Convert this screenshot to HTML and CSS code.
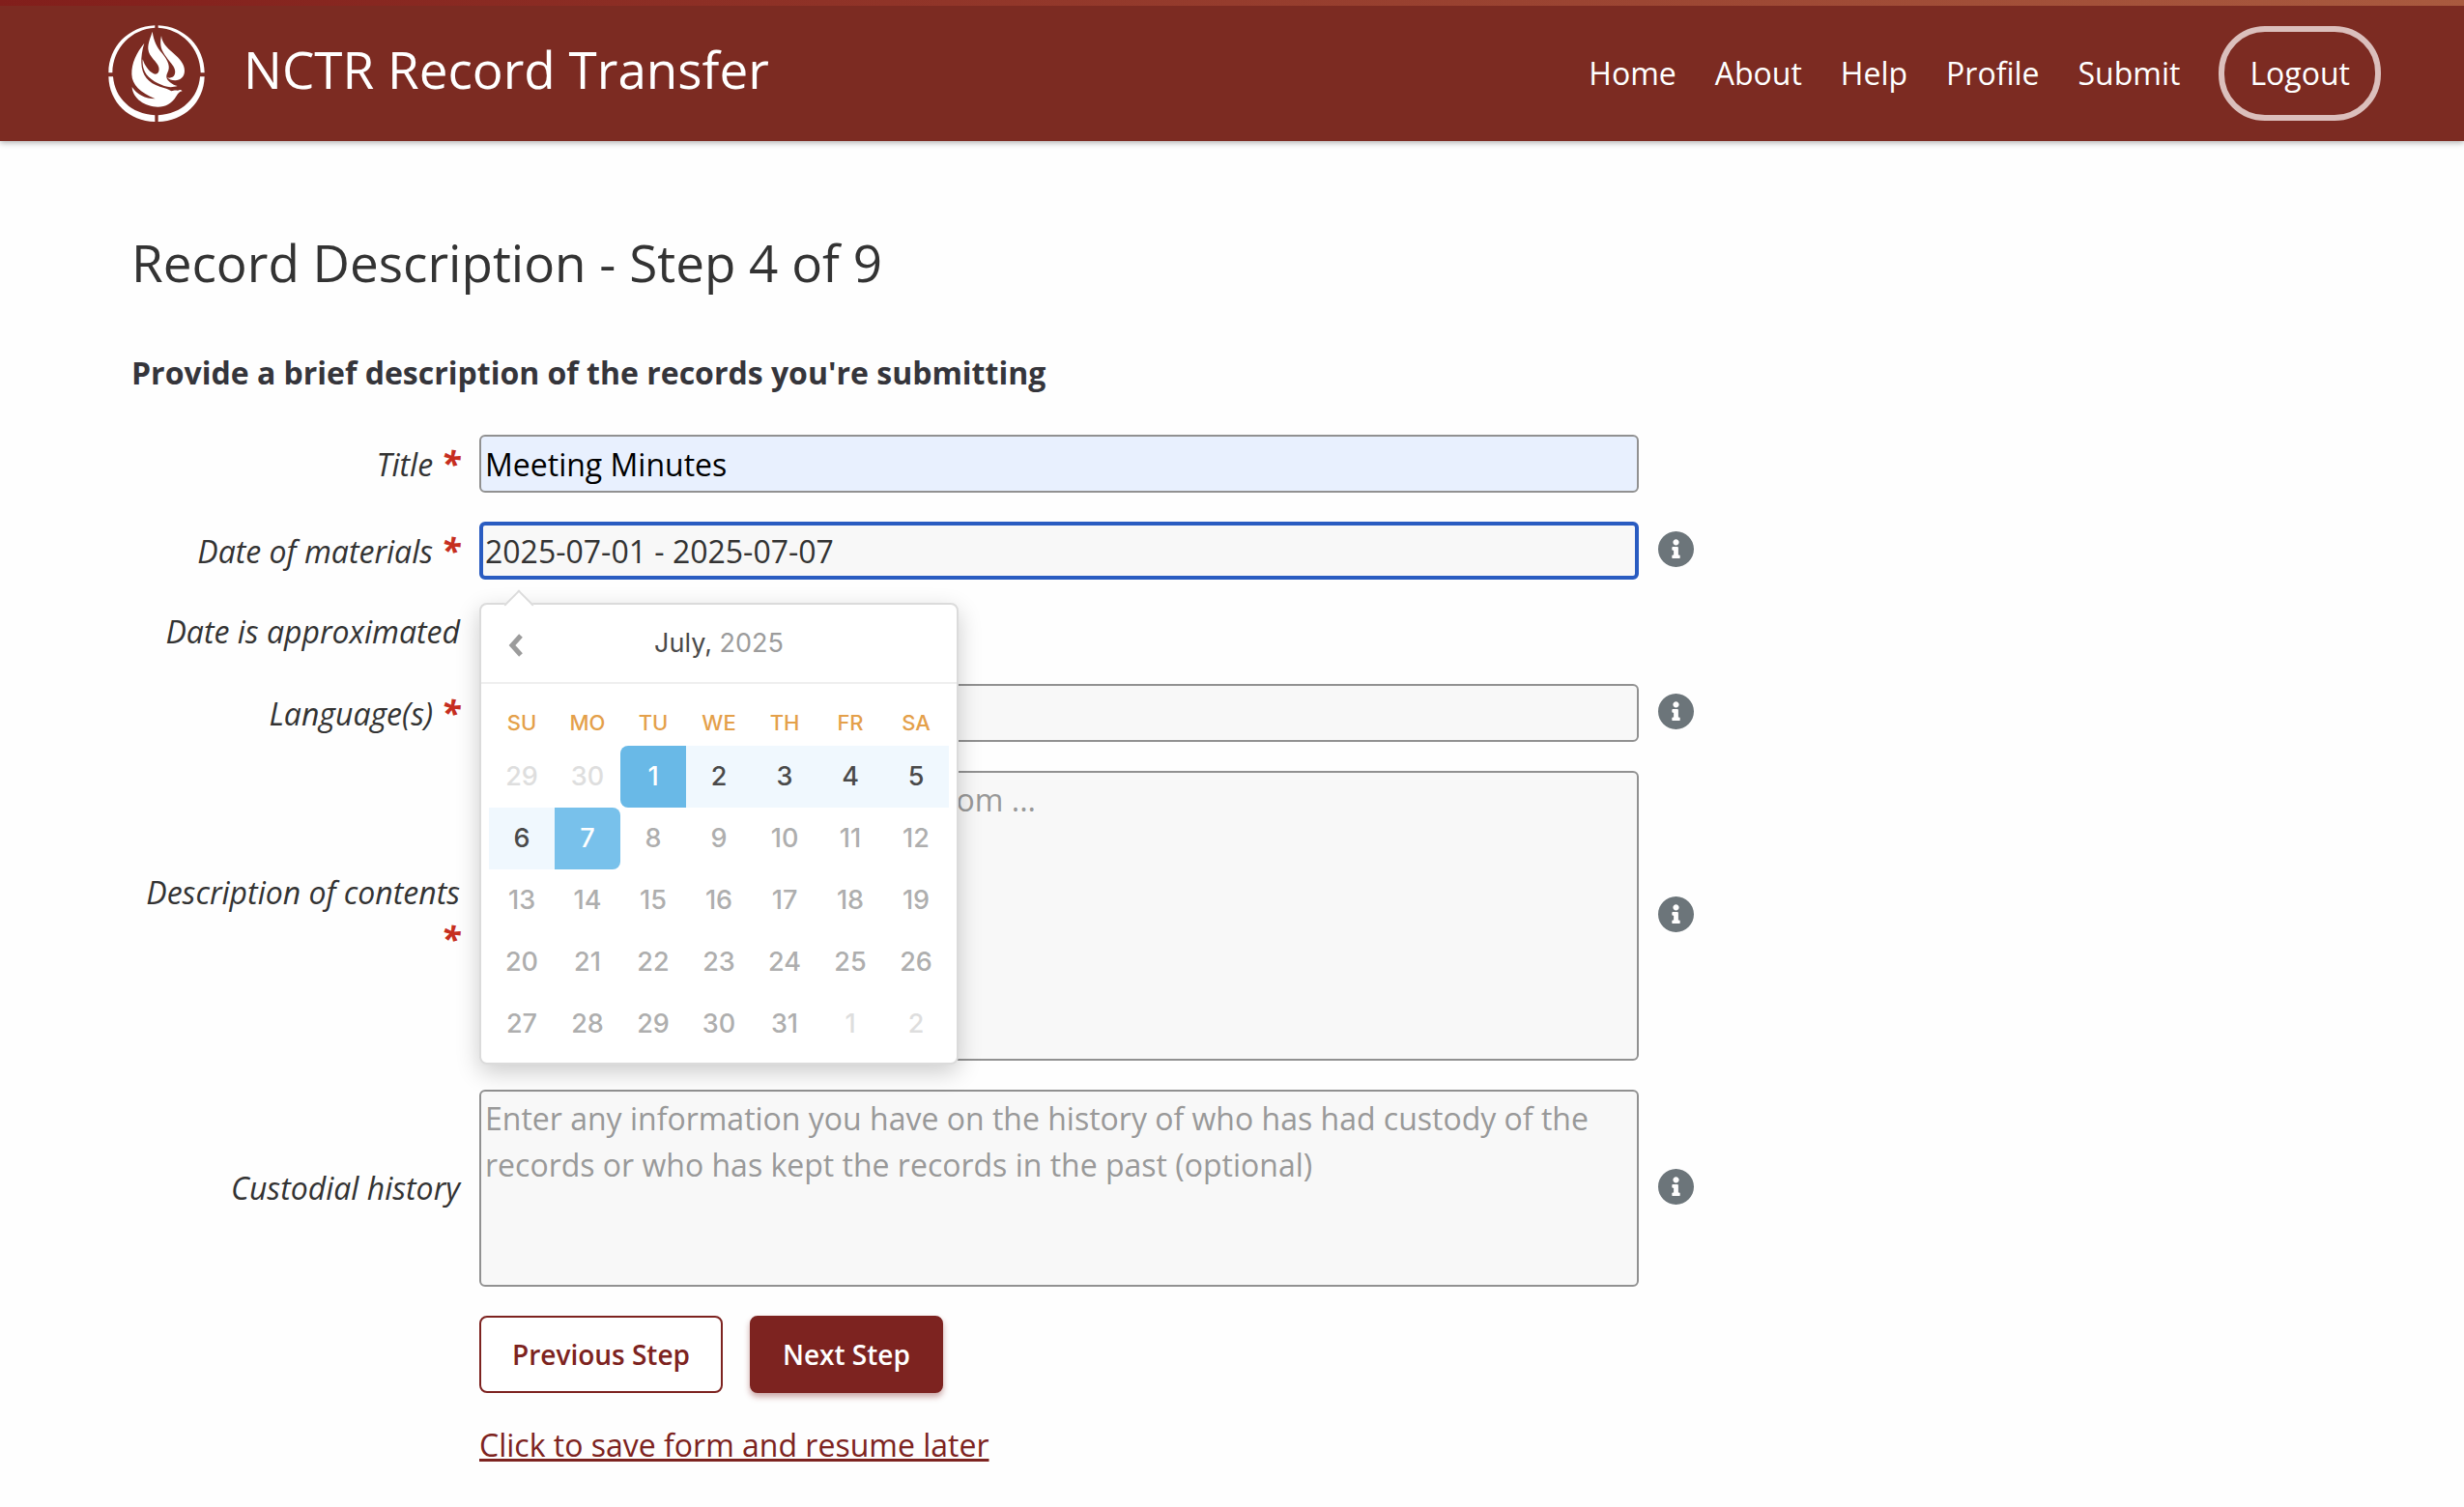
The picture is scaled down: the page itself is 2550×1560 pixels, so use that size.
FILE: index.html
```html
<!DOCTYPE html>
<html lang="en">

<head>
    <meta charset="UTF-8">
    <meta name="viewport" content="width=device-width, initial-scale=1.0">
    <title>NCTR Record Transfer</title>
    <link rel="stylesheet" href="styles.css">
</head>

<body>
    <!-- info icon shared by the form rows -->
    <svg class="sprite" aria-hidden="true">
        <symbol id="info" viewBox="8 8 496 496">
            <path d="M256 8C119.043 8 8 119.083 8 256c0 136.997 111.043 248 248 248s248-111.003 248-248C504 119.083 392.957 8 256 8zm0 110c23.196 0 42 18.804 42 42s-18.804 42-42 42-42-18.804-42-42 18.804-42 42-42zm56 254c0 6.627-5.373 12-12 12h-88c-6.627 0-12-5.373-12-12v-24c0-6.627 5.373-12 12-12h12v-64h-12c-6.627 0-12-5.373-12-12v-24c0-6.627 5.373-12 12-12h64c6.627 0 12 5.373 12 12v100h12c6.627 0 12 5.373 12 12v24z" />
        </symbol>
    </svg>

    <header class="header">
        <a class="brand" href="#">
            <svg class="logo" viewBox="36 32 300 300" aria-hidden="true">
                <path d="M181 33v7C110 44 50 101 49 180H37C37 100 99 36 181 33zM191 33v7c71 4 131 61 132 140h12C335 100 273 36 191 33zM37 192h14c5 67 57 116 130 120v20C101 331 39 272 37 192zM335 192h-14c-5 67-57 116-130 120v20c80-1 142-60 144-140z" />
                <path d="M173 52c5 32 14 48 30 67 20 25 27 43 17 61-6 12-3 21 8 30 7 6 16 10 23 11-12 4-28 5-41 0-28-10-57-27-64-53-3-9-4-20-3-30 6 19 18 37 34 45 12 4 19-6 16-20-4-18-31-32-33-57-1-20 8-36 13-54z" />
                <path d="M201 65c2 22 16 36 37 54 20 17 35 34 35 55 0 19-13 30-29 30-11 0-19-3-25-9 10 3 20-1 23-9 5-12-1-24-10-35-14-18-31-37-33-57-1-12 0-20 2-29z" />
                <path d="M148 88c-7 21-10 44-9 61 1 41 23 63 57 74 14 5 28 7 36 14 7-2 11-4 20-2 6-2 9-3 14 2-9 1-13 7-20 18-13 21-31 31-56 31-38 0-79-26-80-62 15 24 41 36 72 37-47-21-72-43-73-76-1-35 15-68 39-97z" />
            </svg>
            <span class="brand-name">NCTR Record Transfer</span>
        </a>
        <nav class="nav">
            <a href="#">Home</a>
            <a href="#">About</a>
            <a href="#">Help</a>
            <a href="#">Profile</a>
            <a href="#">Submit</a>
            <button type="button" class="logout">Logout</button>
        </nav>
    </header>

    <main class="main">
        <h1 class="page-title">Record Description - Step 4 of 9</h1>
        <h2 class="page-info">Provide a brief description of the records you're submitting</h2>

        <form class="form">
            <div class="row">
                <label class="label" for="title">Title <b class="required">*</b></label>
                <input class="field filled" type="text" id="title" value="Meeting Minutes">
            </div>
            <div class="row">
                <label class="label" for="dates">Date of materials <b class="required">*</b></label>
                <div class="date-wrap">
                    <input class="field active" type="text" id="dates" value="2025-07-01 - 2025-07-07">

                    <div class="datepicker">
                        <div class="datepicker-nav">
                            <button type="button" class="prev" aria-label="Previous month">
                                <svg viewBox="0 0 16 24" aria-hidden="true"><path d="M13 2L4 12l9 10" /></svg>
                            </button>
                            <button type="button" class="month">July, <span>2025</span></button>
                        </div>
                        <table class="days">
                            <thead>
                                <tr><th>SU</th><th>MO</th><th>TU</th><th>WE</th><th>TH</th><th>FR</th><th>SA</th></tr>
                            </thead>
                            <tbody>
                                <tr>
                                    <td class="other">29</td>
                                    <td class="other">30</td>
                                    <td class="range-from">1</td>
                                    <td class="in-range">2</td>
                                    <td class="in-range">3</td>
                                    <td class="in-range">4</td>
                                    <td class="in-range">5</td>
                                </tr>
                                <tr>
                                    <td class="in-range">6</td>
                                    <td class="range-to">7</td>
                                    <td>8</td>
                                    <td>9</td>
                                    <td>10</td>
                                    <td>11</td>
                                    <td>12</td>
                                </tr>
                                <tr><td>13</td><td>14</td><td>15</td><td>16</td><td>17</td><td>18</td><td>19</td></tr>
                                <tr><td>20</td><td>21</td><td>22</td><td>23</td><td>24</td><td>25</td><td>26</td></tr>
                                <tr>
                                    <td>27</td>
                                    <td>28</td>
                                    <td>29</td>
                                    <td>30</td>
                                    <td>31</td>
                                    <td class="other">1</td>
                                    <td class="other">2</td>
                                </tr>
                            </tbody>
                        </table>
                    </div>
                </div>
                <button type="button" class="help" aria-label="About date of materials"><svg><use href="#info" /></svg></button>
            </div>
            <div class="row">
                <label class="label" for="approx">Date is approximated</label>
                <input class="check" type="checkbox" id="approx">
            </div>
            <div class="row">
                <label class="label" for="language">Language(s) <b class="required">*</b></label>
                <input class="field" type="text" id="language">
                <button type="button" class="help" aria-label="About languages"><svg><use href="#info" /></svg></button>
            </div>
            <div class="row">
                <label class="label" for="description">Description of contents <b class="required">*</b></label>
                <textarea class="field tall" id="description" placeholder="e.g., Journals and photographs from ..."></textarea>
                <button type="button" class="help" aria-label="About description of contents"><svg><use href="#info" /></svg></button>
            </div>
            <div class="row">
                <label class="label" for="custody">Custodial history</label>
                <textarea class="field" id="custody" placeholder="Enter any information you have on the history of who has had custody of the records or who has kept the records in the past (optional)"></textarea>
                <button type="button" class="help" aria-label="About custodial history"><svg><use href="#info" /></svg></button>
            </div>
            <div class="row">
                <div class="buttons">
                    <button type="button" class="btn">Previous Step</button>
                    <button type="submit" class="btn btn-next">Next Step</button>
                </div>
            </div>
            <div class="row">
                <a class="save" href="#">Click to save form and resume later</a>
            </div>
        </form>
    </main>
</body>

</html>
```
FILE: styles.css
```css
* {
    box-sizing: border-box;
}

body {
    margin: 0;
    background: #fefefe;
    color: #333;
    font-family: "Open Sans", sans-serif;
    font-size: 32px;
    line-height: 48px;
}

button,
input,
textarea {
    margin: 0;
    font: inherit;
    color: inherit;
}

button {
    cursor: pointer;
}

.sprite {
    display: none;
}

/* header */
.header {
    display: flex;
    justify-content: space-between;
    align-items: center;
    padding: 26px 86px 20px 112px;
    background: linear-gradient(90deg, #821e1b, #a95a3f) top / 100% 6px no-repeat #7c2b22;
    color: #fff;
    box-shadow: 0 2px 6px rgba(0, 0, 0, 0.3);
}

.header a {
    color: #fff;
    text-decoration: none;
}

.brand {
    display: flex;
    align-items: center;
    gap: 40px;
}

.logo {
    width: 100px;
    height: 100px;
    fill: #fff;
}

.brand-name {
    padding-bottom: 8px;
    font-size: 53px;
}

.nav {
    display: flex;
    align-items: center;
    gap: 40px;
}

.logout {
    padding: 19px 26px;
    border: 6px solid #dbbfbc;
    border-radius: 48px;
    background: none;
}

/* page */
.main {
    padding: 90px 136px 24px;
}

.page-title {
    margin: 0 0 54px;
    font-size: 53px;
    font-weight: 400;
    line-height: 72px;
}

.page-info {
    margin: 0 0 40px;
    font-size: 32px;
    font-weight: 700;
    color: #35353b;
}

.form {
    display: flex;
    flex-direction: column;
    gap: 30px;
    max-width: 1620px;
}

.row {
    display: grid;
    grid-template-columns: 340px 1fr 40px;
    column-gap: 20px;
    align-items: center;
}

.label {
    font-style: italic;
    text-align: right;
}

.required {
    font-size: 36px;
    color: #c62e1f;
}

.field {
    display: block;
    width: 100%;
    height: 60px;
    padding: 4px;
    border: 2px solid #919191;
    border-radius: 6px;
    outline: none;
    background: #f8f8f8;
}

.field::placeholder {
    color: #999;
}

textarea.field {
    height: 204px;
    resize: none;
}

textarea.tall {
    height: 300px;
}

.filled {
    background: #e8f0fe;
    color: #000;
}

.active {
    padding: 2px;
    border: 4px solid #2a5cc1;
}

.check {
    width: 26px;
    height: 26px;
}

.help {
    display: flex;
    padding: 0 0 4px;
    border: 0;
    background: none;
}

.help svg {
    width: 37px;
    height: 37px;
    fill: #6c757a;
}

.buttons,
.save {
    grid-column: 2;
}

.buttons {
    display: flex;
    gap: 28px;
}

.btn {
    padding: 14px 32px;
    border: 2px solid #7d2320;
    border-radius: 8px;
    background: #fff;
    color: #7d2320;
    font-size: 28px;
    font-weight: 600;
}

.btn-next {
    background: #7d2320;
    color: #fff;
    box-shadow: 0 4px 6px rgba(125, 35, 32, 0.4);
}

.save {
    justify-self: start;
    color: #7d2320;
}

/* date picker */
.date-wrap {
    position: relative;
}

.datepicker {
    position: absolute;
    top: 84px;
    left: 0;
    z-index: 1;
    width: 496px;
    border: 2px solid #dbdbdb;
    border-radius: 8px;
    background: #fff;
    box-shadow: 0 8px 24px rgba(0, 0, 0, 0.2);
    color: #4a4a4a;
    font-family: Inter, sans-serif;
    font-size: 27px;
}

/* pointer to the input */
.datepicker::before {
    content: '';
    position: absolute;
    top: -11px;
    left: 28px;
    width: 20px;
    height: 20px;
    border: solid #dbdbdb;
    border-width: 2px 0 0 2px;
    background: #fff;
    transform: rotate(45deg);
}

.datepicker-nav {
    display: grid;
    grid-template-columns: 72px 1fr 72px;
    height: 82px;
    border-bottom: 2px solid #efefef;
}

.datepicker-nav button {
    padding: 0;
    border: 0;
    background: none;
}

.datepicker-nav .prev {
    display: flex;
    align-items: center;
    justify-content: center;
    padding-top: 4px;
}

.prev svg {
    width: 16px;
    height: 24px;
    fill: none;
    stroke: #9c9c9c;
    stroke-width: 5;
}

.month span {
    color: #9c9c9c;
}

.days {
    margin: 20px 8px 8px;
    border-collapse: collapse;
    table-layout: fixed;
    width: 476px;
}

.days th,
.days td {
    padding: 0;
    text-align: center;
}

.days th {
    height: 44px;
    padding-bottom: 4px;
    color: #e4a04a;
    font-size: 22px;
    font-weight: 500;
    line-height: 40px;
}

.days td {
    height: 64px;
    color: #aeaeae;
    font-weight: 500;
}

.days .other {
    color: #dedede;
}

.days .in-range {
    background: #f0f8fe;
    color: #4a4a4a;
}

.days .range-from,
.days .range-to {
    background: #69b9e7;
    color: #fff;
    border-radius: 8px 0 0 8px;
}

.days .range-to {
    background: #78c1eb;
    border-radius: 0 8px 8px 0;
}
```
